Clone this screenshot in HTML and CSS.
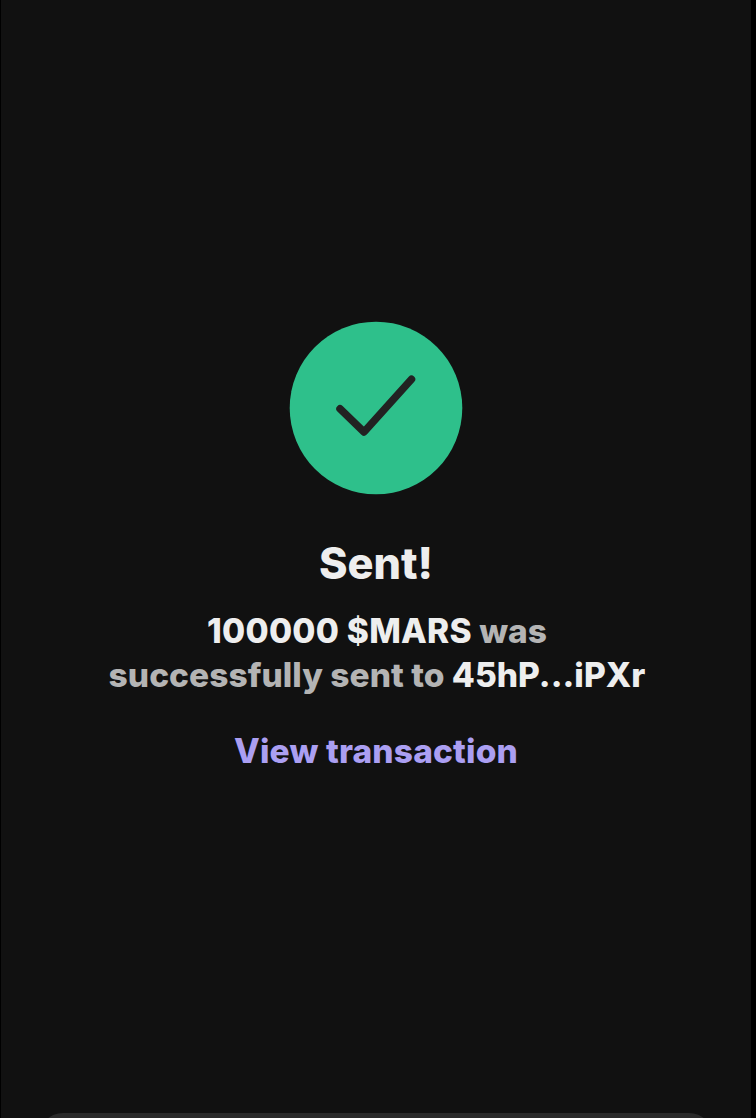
FILE: index.html
```
<!DOCTYPE html>
<html lang="en">
<head>
    <meta charset="UTF-8">
    <meta name="viewport" content="width=device-width, initial-scale=1.0">
    <title>Sent</title>
    <link rel="stylesheet" href="styles.css">
</head>
<body>
    <main class="screen">
        <div class="result">
            <svg class="check-icon" viewBox="0 0 174 174" fill="none">
                <circle cx="87" cy="87" r="86.3" fill="#2ec08b"/>
                <path d="M51 87.8L75 111L122.5 58.3" stroke="#222" stroke-width="7.5" stroke-linecap="round" stroke-linejoin="round"/>
            </svg>
            <h1 class="title">Sent!</h1>
            <p class="message"><span class="strong amount">100000 $MARS</span> was<br>successfully sent to <span class="strong">45hP...iPXr</span></p>
            <a class="link" href="#">View transaction</a>
        </div>
        <button class="close-btn" aria-label="Close"></button>
    </main>
</body>
</html>
```

FILE: styles.css
```
body{
    margin: 0;
    background-color: #000;
    font-family: Inter, "Liberation Sans", sans-serif;
}
.screen{
    display: flex;
    flex-direction: column;
    box-sizing: border-box;
    width: 750px;
    height: 1118px;
    margin-left: 1px;
    padding: 321px 38px 0;
    background-color: #111;
    overflow: hidden;
}
.result{
    display: flex;
    flex-direction: column;
    align-items: center;
    height: 792px;
    flex-shrink: 0;
    font-weight: 800;
    text-align: center;
}
.check-icon{
    width: 174px;
    height: 174px;
}
.title{
    margin: 41px 0 0;
    font-size: 43.3px;
    font-weight: 800;
    line-height: 54px;
    color: #eee;
}
.message{
    margin: 19px 0 0;
    padding-left: 2px;
    font-size: 33.5px;
    line-height: 44px;
    letter-spacing: 0.03px;
    color: #b4b4b4;
    white-space: nowrap;
}
.strong{
    color: #eee;
}
.amount{
    letter-spacing: 0.25px;
}
.link{
    margin-top: 32px;
    font-size: 33.5px;
    line-height: 44px;
    letter-spacing: 0.15px;
    color: #ab9ff2;
    text-decoration: none;
}
.close-btn{
    flex-shrink: 0;
    height: 92px;
    border: none;
    border-radius: 24px;
    background-color: #2a2a2a;
}
```
